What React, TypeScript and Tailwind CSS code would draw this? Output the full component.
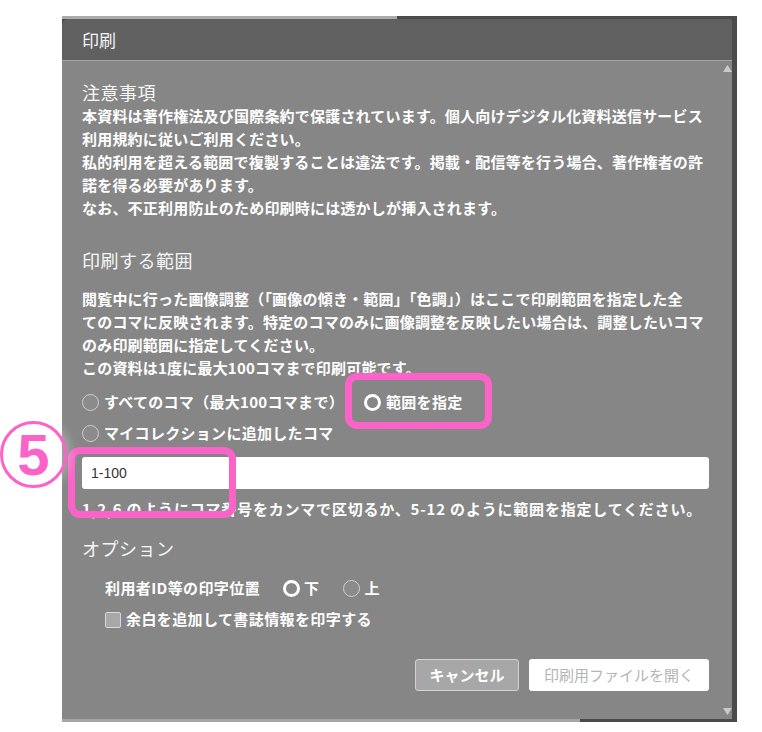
const FONT = "font-['Noto_Sans_CJK_JP','Noto_Sans',sans-serif]"

function Radio({ checked }: { checked?: boolean }) {
  return checked ? (
    <span className="inline-block w-[17px] h-[17px] rounded-full border-[3px] border-white bg-[#878787] shrink-0" />
  ) : (
    <span className="inline-block w-[17px] h-[17px] rounded-full border border-[#cfcfcf] bg-[#8b8b8b] shrink-0" />
  )
}

export default function App() {
  return (
    <div className={`relative w-[762px] h-[732px] bg-white overflow-hidden ${FONT}`}>
      <div className="ml-[62px] mt-[16px] w-[675px] bg-[#4a4a4a]">
        {/* strip of the page behind */}
        <div className="h-[3px] w-[335px] bg-[#a9aca9]" />

        <div className="mr-[5px]">
          <div className="h-[42px] bg-[#606060] rounded-tl-[6px] rounded-tr-[3px] border-b border-[#a4a4a4] flex items-center pl-[20px]">
            <span className="text-[17px] text-[#f4f4f4] leading-none">印刷</span>
          </div>

          <div className="h-[658px] bg-[#868686] flex">
            <div className="flex-1 min-w-0 pl-[20px] pr-[13px] pt-[20px] text-white">
              <h2 className="text-[18px] tracking-[0.5px] leading-[23px] text-[#f6f6f6]">注意事項</h2>
              <p className="text-[15px] tracking-[0.2px] leading-[23px] font-bold whitespace-nowrap">
                本資料は著作権法及び国際条約で保護されています。個人向けデジタル化資料送信サービス
                <br />
                利用規約に従いご利用ください。
                <br />
                私的利用を超える範囲で複製することは違法です。掲載・配信等を行う場合、著作権者の許
                <br />
                諾を得る必要があります。
                <br />
                なお、不正利用防止のため印刷時には透かしが挿入されます。
              </p>

              <h2 className="mt-[30px] text-[18px] tracking-[0.5px] leading-[23px] text-[#f6f6f6]">印刷する範囲</h2>
              <p className="mt-[15px] text-[15px] tracking-[0.2px] leading-[23px] font-bold whitespace-nowrap">
                閲覧中に行った画像調整（「画像の傾き・範囲」「色調」）はここで印刷範囲を指定した全
                <br />
                てのコマに反映されます。特定のコマのみに画像調整を反映したい場合は、調整したいコマ
                <br />
                のみ印刷範囲に指定してください。
                <br />
                この資料は1度に最大100コマまで印刷可能です。
              </p>

              <div className="mt-[8px] text-[15px] tracking-[0.3px] font-bold">
                <div className="h-[31px] flex items-center">
                  <label className="w-[282px] flex items-center gap-[5px]">
                    <Radio />
                    <span>すべてのコマ（最大100コマまで）</span>
                  </label>
                  <label className="flex items-center gap-[5px]">
                    <Radio checked />
                    <span>範囲を指定</span>
                  </label>
                </div>
                <div className="h-[31px] flex items-center">
                  <label className="flex items-center gap-[5px]">
                    <Radio />
                    <span>マイコレクションに追加したコマ</span>
                  </label>
                </div>
              </div>

              <input
                type="text"
                defaultValue="1-100"
                className="mt-[8px] w-full h-[32px] bg-white rounded-[3px] px-[9px] text-[14px] text-[#333] outline-none font-['Liberation_Sans','Noto_Sans_CJK_JP',sans-serif]"
              />

              <p className="mt-[8px] text-[15px] tracking-[0.8px] leading-[23px] font-bold whitespace-nowrap">
                1,2,6 のようにコマ番号をカンマで区切るか、5-12 のように範囲を指定してください。
              </p>

              <h2 className="mt-[17px] text-[18px] tracking-[0.5px] leading-[23px] text-[#f6f6f6]">オプション</h2>

              <div className="pl-[23px] text-[15px] tracking-[0.4px] font-bold">
                <div className="mt-[17px] h-[23px] flex items-center">
                  <span className="w-[178px]">利用者ID等の印字位置</span>
                  <label className="flex items-center gap-[4px]">
                    <Radio checked />
                    <span>下</span>
                  </label>
                  <label className="ml-[24px] flex items-center gap-[4px]">
                    <Radio />
                    <span>上</span>
                  </label>
                </div>
                <label className="mt-[8px] h-[23px] flex items-center gap-[5px]">
                  <span className="inline-block w-[16px] h-[16px] bg-[#a8a8a8] border border-[#d8d8d8] rounded-[2px]" />
                  <span>余白を追加して書誌情報を印字する</span>
                </label>
              </div>

              <div className="mt-[28px] flex justify-end gap-[10px]">
                <button className="w-[104px] h-[32px] rounded-[3px] bg-[#a7a7a7] border border-[#d2d2d2] text-white text-[15px] font-bold">
                  キャンセル
                </button>
                <button className="w-[180px] h-[32px] rounded-[3px] bg-white text-[#b4b4b4] text-[15px]">
                  印刷用ファイルを開く
                </button>
              </div>
            </div>

            {/* scrollbar */}
            <div className="w-[10px] shrink-0 flex flex-col justify-between items-center pt-[4px] pb-[4px]">
              <svg width="9" height="7" viewBox="0 0 9 7">
                <path d="M4.5 0 L9 7 L0 7 Z" fill="#cacaca" />
              </svg>
              <svg width="9" height="7" viewBox="0 0 9 7">
                <path d="M0 0 L9 0 L4.5 7 Z" fill="#cacaca" />
              </svg>
            </div>
          </div>
        </div>

        <div className="h-[3px] flex">
          <div className="w-[518px] bg-[#a2a8a2]" />
          <div className="flex-1 bg-[#4a4a4a]" />
        </div>
      </div>

      {/* annotations */}
      <div className="absolute left-[345px] top-[373px] w-[147px] h-[56px] rounded-[12px] border-[7px] border-[#fb63c9]" />
      <div className="absolute left-[68px] top-[447px] w-[168px] h-[71px] rounded-[12px] border-[7px] border-[#fb63c9]" />
      <div className="absolute left-[0px] top-[421px] w-[67px] h-[67px] rounded-full border-[3px] border-[#fb63c9] flex items-center justify-center drop-shadow-[0_0_6px_rgba(255,255,255,1)]">
        <span className="text-[58px] leading-none font-bold text-[#fb63c9] font-['Liberation_Sans',sans-serif]">5</span>
      </div>
    </div>
  )
}
